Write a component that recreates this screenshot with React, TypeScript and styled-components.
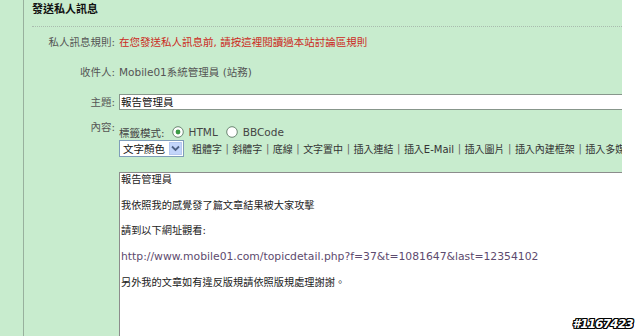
import React from "react";
import styled, { createGlobalStyle } from "styled-components";

const Global = createGlobalStyle`
  html, body { margin: 0; padding: 0; background: #fff; }
  body {
    width: 640px; height: 336px; overflow: hidden;
    font-family: "DejaVu Sans", "Noto Sans CJK TC", sans-serif;
    font-size: 10.5px;
  }
`;

const Page = styled.div`
  position: relative;
  display: flex;
  width: 640px;
  height: 336px;
  overflow: hidden;
  background: #fff;
`;

const Strip = styled.div`
  flex: none;
  width: 23px;
  background: #c8ecce;
  border-right: 1px solid #98b09d;
`;

const Panel = styled.div`
  flex: none;
  width: 598px;
  display: flex;
  flex-direction: column;
  background: #c8ecce;
  overflow: hidden;
`;

const Title = styled.div`
  margin-left: 8px;
  height: 26px;
  line-height: 20px;
  font-size: 11px;
  font-weight: bold;
  color: #111;
  border-bottom: 1px dotted #a9bcae;
`;

const Row = styled.div<{ $h?: number; $grow?: boolean }>`
  display: grid;
  grid-template-columns: 91px minmax(0, 1fr);
  column-gap: 4px;
  align-items: ${(p) => (p.$h && !p.$grow ? "start" : "stretch")};
  ${(p) => (p.$h ? `height: ${p.$h}px;` : "")}
  ${(p) => (p.$grow ? "flex: 1; min-height: 0;" : "")}
`;

const Label = styled.div<{ $top: number }>`
  text-align: right;
  color: #555;
  line-height: 14px;
  margin-top: ${(p) => p.$top}px;
  white-space: nowrap;
`;

const Value = styled.div<{ $top: number; $color?: string }>`
  line-height: 14px;
  margin-top: ${(p) => p.$top}px;
  color: ${(p) => p.$color || "#555"};
  white-space: nowrap;
`;

const TextInput = styled.div`
  margin-top: 7px;
  height: 14px;
  line-height: 14px;
  background: #fff;
  border: 1px solid #87968b;
  border-right: none;
  padding-left: 1px;
  color: #111;
`;

const Controls = styled.div`
  padding-top: 14px;
  display: flex;
  flex-direction: column;
  overflow: hidden;
`;

const ModeLine = styled.div`
  height: 16px;
  display: flex;
  align-items: center;
  color: #444;
  white-space: nowrap;
`;

const ModeLabel = styled.span`
  margin-right: 7px;
`;

const RadioText = styled.span<{ $gap: number }>`
  margin-left: 5px;
  margin-right: ${(p) => p.$gap}px;
  color: #444;
`;

const Toolbar = styled.div`
  height: 17px;
  display: flex;
  align-items: center;
  white-space: nowrap;
  overflow: hidden;
  font-size: 10px;
  color: #333;
`;

const Select = styled.div`
  flex: none;
  width: 60px;
  height: 15px;
  display: flex;
  align-items: center;
  justify-content: space-between;
  background: #fff;
  border: 1px solid #7f9db9;
  margin-right: 8px;
  padding-left: 3px;
  box-sizing: content-box;
  font-size: 10.5px;
  color: #111;
`;

const DropBtn = styled.span`
  width: 13px;
  height: 13px;
  margin-right: 1px;
  display: flex;
  align-items: center;
  justify-content: center;
  background: #c3d5fa;
  border: 1px solid #b5c8f0;
  box-sizing: border-box;
`;

const Tool = styled.span`
  flex: none;
`;

const Sep = styled.span`
  flex: none;
  color: #666;
  margin: 0 3.5px;
`;

const Editor = styled.div`
  background: #fff;
  border-left: 1px solid #8c8c8c;
  border-top: 1px solid #8c8c8c;
  padding: 0 0 0 1px;
  line-height: 13px;
  color: #222;
  overflow: hidden;
  white-space: nowrap;
`;

const Para = styled.p<{ $link?: boolean }>`
  margin: 0 0 12.7px;
  font-size: ${(p) => (p.$link ? "10.8px" : "10.2px")};
  color: ${(p) => (p.$link ? "#5d4a6e" : "#222")};
`;

const Stamp = styled.div`
  position: absolute;
  right: 7px;
  bottom: 5px;
  font-family: "DejaVu Sans", sans-serif;
  font-weight: bold;
  font-style: italic;
  font-size: 12px;
  letter-spacing: -0.8px;
  color: #fff;
  text-shadow: 1px 0 0 #000, -1px 0 0 #000, 0 1px 0 #000, 0 -1px 0 #000,
    1px 1px 0 #000, -1px -1px 0 #000, 1px -1px 0 #000, -1px 1px 0 #000;
`;

function Radio({ checked }: { checked?: boolean }) {
  return (
    <svg width="12" height="12" viewBox="0 0 12 12">
      <circle cx="6" cy="6" r="5.3" fill="#fff" stroke="#6c8673" strokeWidth="1" />
      {checked && <circle cx="6" cy="6" r="2.4" fill="#3b9a45" />}
    </svg>
  );
}

const tools = [
  "粗體字",
  "斜體字",
  "底線",
  "文字置中",
  "插入連結",
  "插入E-Mail",
  "插入圖片",
  "插入內建框架",
  "插入多媒體",
];

export default function App() {
  return (
    <Page>
      <Global />
      <Strip />
      <Panel>
        <Title>發送私人訊息</Title>
        <Row $h={30}>
          <Label $top={8}>私人訊息規則:</Label>
          <Value $top={8} $color="#cc2a22">
            在您發送私人訊息前, 請按這裡閱讀過本站討論區規則
          </Value>
        </Row>
        <Row $h={30}>
          <Label $top={8}>收件人:</Label>
          <Value $top={8}>Mobile01系統管理員 (站務)</Value>
        </Row>
        <Row $h={23}>
          <Label $top={8}>主題:</Label>
          <TextInput>報告管理員</TextInput>
        </Row>
        <Row $h={62}>
          <Label $top={10}>內容:</Label>
          <Controls>
            <ModeLine>
              <ModeLabel>標籤模式:</ModeLabel>
              <Radio checked />
              <RadioText $gap={8}>HTML</RadioText>
              <Radio />
              <RadioText $gap={0}>BBCode</RadioText>
            </ModeLine>
            <Toolbar>
              <Select>
                文字顏色
                <DropBtn>
                  <svg width="9" height="7" viewBox="0 0 9 7">
                    <path d="M1 1.5 L4.5 5 L8 1.5" fill="none" stroke="#4d6185" strokeWidth="1.8" />
                  </svg>
                </DropBtn>
              </Select>
              {tools.map((t, i) => (
                <React.Fragment key={t}>
                  {i > 0 && <Sep>|</Sep>}
                  <Tool>{t}</Tool>
                </React.Fragment>
              ))}
            </Toolbar>
          </Controls>
        </Row>
        <Row $grow>
          <div />
          <Editor>
            <Para>報告管理員</Para>
            <Para>我依照我的感覺發了篇文章結果被大家攻擊</Para>
            <Para>請到以下網址觀看:</Para>
            <Para $link>http://www.mobile01.com/topicdetail.php?f=37&amp;t=1081647&amp;last=12354102</Para>
            <Para>另外我的文章如有違反版規請依照版規處理謝謝。</Para>
          </Editor>
        </Row>
      </Panel>
      <Stamp>#1167423</Stamp>
    </Page>
  );
}
